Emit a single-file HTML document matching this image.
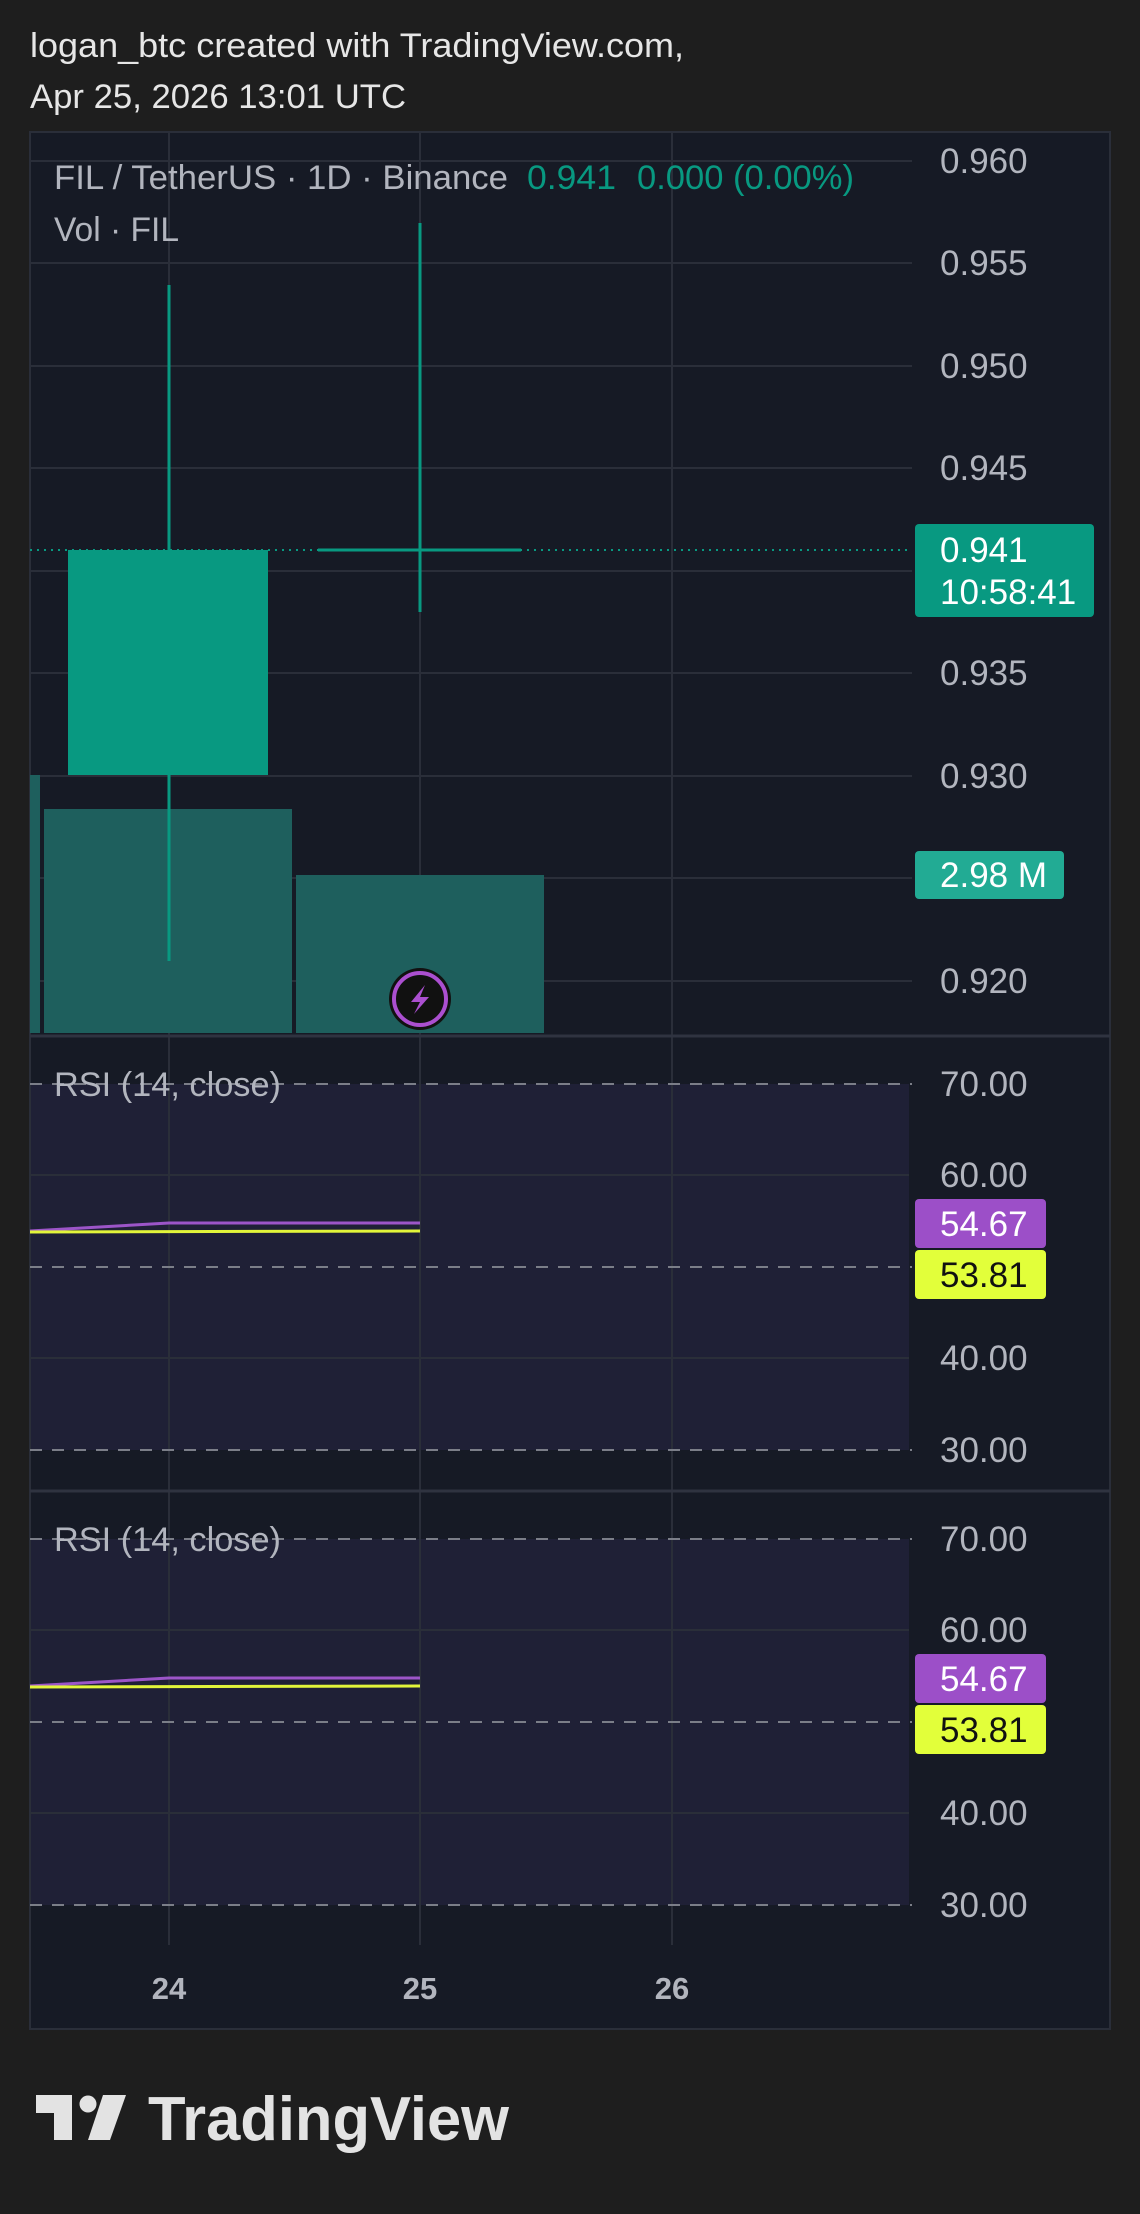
<!DOCTYPE html>
<html><head><meta charset="utf-8"><style>
html,body{margin:0;padding:0;background:#1e1e1e;}
body{width:1140px;height:2209px;overflow:hidden;font-family:"Liberation Sans",sans-serif;}
</style></head><body>
<svg width="1140" height="2209" xmlns="http://www.w3.org/2000/svg" font-family="Liberation Sans, sans-serif">
<rect width="1140" height="2209" fill="#1e1e1e"/>
<text x="30" y="57" fill="#e6e6e6" font-size="34" textLength="654" lengthAdjust="spacingAndGlyphs">logan_btc created with TradingView.com,</text>
<text x="30" y="108" fill="#e6e6e6" font-size="34" textLength="376" lengthAdjust="spacingAndGlyphs">Apr 25, 2026 13:01 UTC</text>
<rect x="30" y="132" width="1080" height="1897" fill="#161a25" stroke="#2a2e39" stroke-width="2"/>
<rect x="31" y="1084" width="878" height="366" fill="#1f2036"/>
<rect x="31" y="1539" width="878" height="366" fill="#1f2036"/>
<g stroke="#2a2e39" stroke-width="2">
<line x1="169" y1="133" x2="169" y2="1945"/><line x1="420" y1="133" x2="420" y2="1945"/><line x1="672" y1="133" x2="672" y2="1945"/>
<line x1="31" y1="161" x2="912" y2="161"/><line x1="31" y1="263" x2="912" y2="263"/><line x1="31" y1="366" x2="912" y2="366"/><line x1="31" y1="468" x2="912" y2="468"/><line x1="31" y1="571" x2="912" y2="571"/><line x1="31" y1="673" x2="912" y2="673"/><line x1="31" y1="776" x2="912" y2="776"/><line x1="31" y1="878" x2="912" y2="878"/><line x1="31" y1="981" x2="912" y2="981"/>
<line x1="31" y1="1175" x2="909" y2="1175"/><line x1="31" y1="1358" x2="909" y2="1358"/>
<line x1="31" y1="1630" x2="909" y2="1630"/><line x1="31" y1="1813" x2="909" y2="1813"/>
</g>
<line x1="30" y1="1036" x2="1110" y2="1036" stroke="#2f3340" stroke-width="3"/>
<line x1="30" y1="1491" x2="1110" y2="1491" stroke="#2f3340" stroke-width="3"/>
<g stroke="#7b7e88" stroke-width="2" stroke-dasharray="12 10">
<line x1="30" y1="1084" x2="912" y2="1084"/><line x1="30" y1="1267" x2="912" y2="1267"/><line x1="30" y1="1450" x2="912" y2="1450"/>
<line x1="30" y1="1539" x2="912" y2="1539"/><line x1="30" y1="1722" x2="912" y2="1722"/><line x1="30" y1="1905" x2="912" y2="1905"/>
</g>
<rect x="30" y="775" width="10" height="258" fill="#1e5f5d"/>
<rect x="44" y="809" width="248" height="224" fill="#1e5f5d"/>
<rect x="296" y="875" width="248" height="158" fill="#1e5f5d"/>
<line x1="30" y1="550" x2="912" y2="550" stroke="#089981" stroke-width="2" stroke-dasharray="2 5"/>
<line x1="169" y1="285" x2="169" y2="961" stroke="#089981" stroke-width="3"/>
<rect x="68" y="550" width="200" height="225" fill="#089981"/>
<line x1="420" y1="223" x2="420" y2="612" stroke="#089981" stroke-width="3"/>
<line x1="318" y1="550" x2="521" y2="550" stroke="#089981" stroke-width="3"/>
<circle cx="420" cy="999" r="31" fill="#111" />
<circle cx="420" cy="999" r="26" fill="none" stroke="#ab4fd0" stroke-width="4"/>
<path d="M425 985 L411 1002 L420 1002 L414 1014 L429 997 L420 997 Z" fill="#ab4fd0"/>
<text x="54" y="189" font-size="34" fill="#b2b5be" textLength="454" lengthAdjust="spacingAndGlyphs">FIL / TetherUS · 1D · Binance</text>
<text x="527" y="189" font-size="34" fill="#089981" textLength="89" lengthAdjust="spacingAndGlyphs">0.941</text>
<text x="637" y="189" font-size="34" fill="#089981" textLength="217" lengthAdjust="spacingAndGlyphs">0.000 (0.00%)</text>
<text x="54" y="241" font-size="34" fill="#b2b5be" textLength="125" lengthAdjust="spacingAndGlyphs">Vol · FIL</text>
<text x="54" y="1096" font-size="34" fill="#b2b5be" textLength="227" lengthAdjust="spacingAndGlyphs">RSI (14, close)</text>
<text x="54" y="1551" font-size="34" fill="#b2b5be" textLength="227" lengthAdjust="spacingAndGlyphs">RSI (14, close)</text>
<polyline points="30,1231 169,1223 420,1223" fill="none" stroke="#9c55c8" stroke-width="3"/>
<polyline points="30,1232 420,1231" fill="none" stroke="#e2f53a" stroke-width="3"/>
<polyline points="30,1686 169,1678 420,1678" fill="none" stroke="#9c55c8" stroke-width="3"/>
<polyline points="30,1687 420,1686" fill="none" stroke="#e2f53a" stroke-width="3"/>
<g font-size="35" fill="#b2b5be">
<text x="940" y="173">0.960</text><text x="940" y="275">0.955</text><text x="940" y="378">0.950</text><text x="940" y="480">0.945</text><text x="940" y="685">0.935</text><text x="940" y="788">0.930</text><text x="940" y="993">0.920</text>
<text x="940" y="1096">70.00</text><text x="940" y="1187">60.00</text><text x="940" y="1370">40.00</text><text x="940" y="1462">30.00</text>
<text x="940" y="1551">70.00</text><text x="940" y="1642">60.00</text><text x="940" y="1825">40.00</text><text x="940" y="1917">30.00</text>
</g>
<rect x="915" y="524" width="179" height="93" rx="4" fill="#089981"/>
<text x="940" y="562" font-size="35" fill="#fff">0.941</text>
<text x="940" y="604" font-size="35" fill="#fff">10:58:41</text>
<rect x="915" y="851" width="149" height="48" rx="4" fill="#22ab94"/>
<text x="940" y="887" font-size="35" fill="#fff">2.98 M</text>
<rect x="915" y="1199" width="131" height="49" rx="4" fill="#9c4fc8"/>
<text x="940" y="1236" font-size="35" fill="#fff">54.67</text>
<rect x="915" y="1250" width="131" height="49" rx="4" fill="#e2ff3a"/>
<text x="940" y="1287" font-size="35" fill="#111">53.81</text>
<rect x="915" y="1654" width="131" height="49" rx="4" fill="#9c4fc8"/>
<text x="940" y="1691" font-size="35" fill="#fff">54.67</text>
<rect x="915" y="1705" width="131" height="49" rx="4" fill="#e2ff3a"/>
<text x="940" y="1742" font-size="35" fill="#111">53.81</text>
<g font-size="31" fill="#b2b5be" font-weight="bold" text-anchor="middle">
<text x="169" y="1999">24</text><text x="420" y="1999">25</text><text x="672" y="1999">26</text>
</g>
<g fill="#e3e3e3">
<path d="M36 2095 H72 V2140 H54 V2113 H36 Z"/>
<circle cx="88" cy="2104" r="8.5"/>
<path d="M103 2095 H126 L110 2140 H88 Z"/>
<text x="148" y="2140" font-size="62" font-weight="bold" textLength="361" lengthAdjust="spacingAndGlyphs">TradingView</text>
</g>
</svg>
</body></html>
